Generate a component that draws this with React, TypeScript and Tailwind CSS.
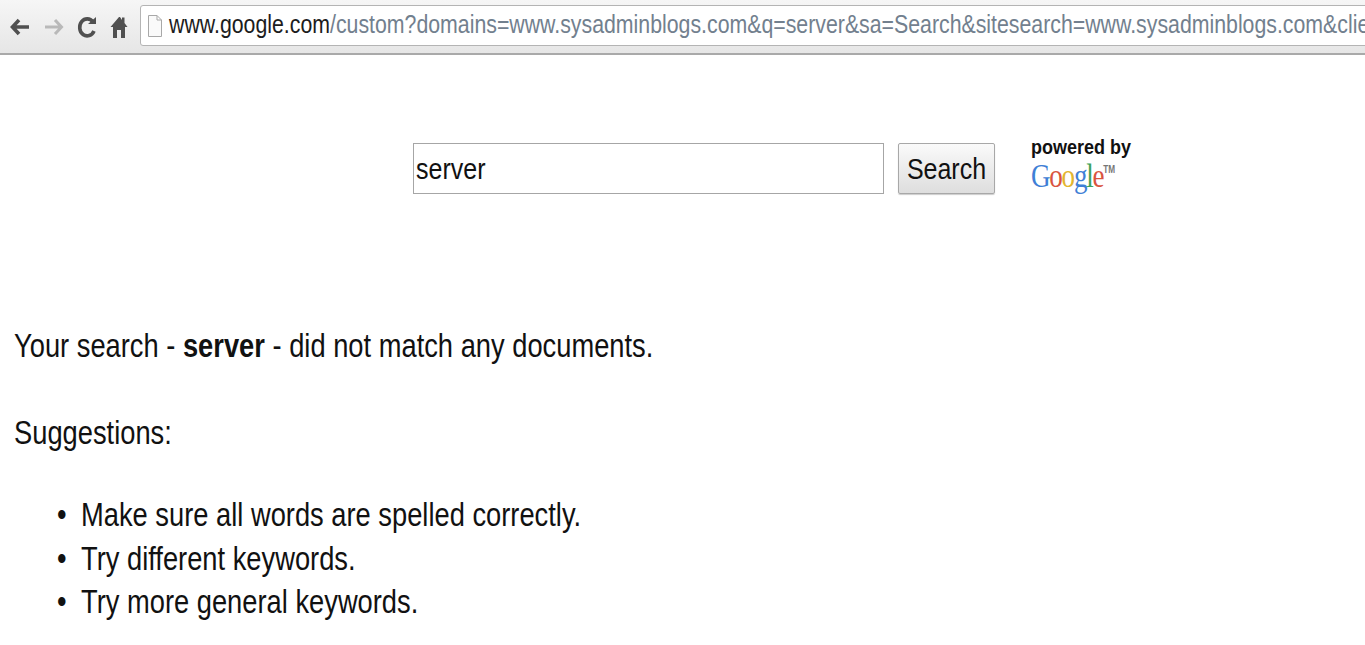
const sans = "font-['Liberation_Sans',Arial,sans-serif]";

function Toolbar() {
  return (
    <div className="h-[55px] flex items-center bg-gradient-to-b from-[#f6f6f6] to-[#e6e6e6] border-b-2 border-[#a9a9a9] pl-[10px]">
      <svg width="20" height="18" viewBox="0 0 20 18" className="mr-[14px]">
        <path d="M9 2 L2.5 9 L9 16 M3 9 H19" fill="none" stroke="#505050" strokeWidth="3.6" />
      </svg>
      <svg width="20" height="18" viewBox="0 0 20 18" className="mr-[13px]">
        <path d="M11 2 L17.5 9 L11 16 M17 9 H1" fill="none" stroke="#b9b9b9" strokeWidth="3" />
      </svg>
      <svg width="20" height="24" viewBox="0 0 20 24" className="mr-[13px]">
        <path d="M16 7 A7.5 8.5 0 1 0 17 16" fill="none" stroke="#505050" strokeWidth="3.6" />
        <path d="M11 9 H19 V2 Z" fill="#505050" />
      </svg>
      <svg width="18" height="24" viewBox="0 0 18 24" className="mr-[12px]">
        <path d="M9 2 L0.5 12 H3 V23 H7 V15 H11 V23 H15 V12 H17.5 L14.5 8 V2.5 H12 V5 L10 2 Z" fill="#505050" />
      </svg>
      <div className="flex-1 h-[41px] -mr-2 mt-[-2px] flex items-center bg-white border border-[#b4b4b4] rounded-l-[3px] pl-[7px] overflow-hidden">
        <svg width="14" height="22" viewBox="0 0 14 22" className="mr-[7px] shrink-0">
          <path d="M0.5 0.5 H9 L13.5 5 V21.5 H0.5 Z M9 0.5 V5 H13.5" fill="#fafafa" stroke="#a8a8a8" />
        </svg>
        <span className={`${sans} text-[21.3px] leading-none whitespace-nowrap scale-y-[1.2] text-[#72808e]`}>
          <span className="text-[#1c1c1c]">www.google.com</span>
          /custom?domains=www.sysadminblogs.com&amp;q=server&amp;sa=Search&amp;sitesearch=www.sysadminblogs.com&amp;client=pub-556338665037
        </span>
      </div>
    </div>
  );
}

function GoogleLogo() {
  return (
    <div className="font-['Liberation_Serif',serif] text-[33px] leading-none tracking-[-1.5px] scale-x-[0.82] origin-left h-[38px] whitespace-nowrap">
      <span className="text-[#3f7fd6]">G</span>
      <span className="text-[#d9543f]">o</span>
      <span className="text-[#e3b52f]">o</span>
      <span className="text-[#3f7fd6]">g</span>
      <span className="text-[#3da35a]">l</span>
      <span className="text-[#d9543f]">e</span>
      <span className={`${sans} text-[#777] text-[10px] align-[14px] font-bold tracking-normal`}>TM</span>
    </div>
  );
}

function SearchForm() {
  return (
    <div className="flex items-start pt-[88px] pl-[413px]">
      <div className="w-[471px] h-[51px] flex items-center bg-white border border-[#a6a6a6] pl-[2px]">
        <span className={`${sans} text-[25px] leading-none scale-y-[1.2] text-[#111]`}>server</span>
      </div>
      <div className="ml-[14px] w-[97px] h-[51px] flex items-center justify-center bg-gradient-to-b from-[#fafafa] to-[#dedede] border border-[#a8a8a8] rounded-[2px] shadow-[0_1px_1px_rgba(0,0,0,0.2)]">
        <span className={`${sans} text-[25px] leading-none scale-y-[1.2] text-[#111]`}>Search</span>
      </div>
      <div className="ml-[36px] mt-[-9px] flex flex-col items-start">
        <span className={`${sans} text-[18px] h-[26px] leading-[26px] font-bold scale-y-[1.15] origin-left text-[#111] whitespace-nowrap`}>powered by</span>
        <GoogleLogo />
      </div>
    </div>
  );
}

export default function App() {
  const line = "h-[43.5px] leading-[43.5px] text-[27.3px] scale-y-[1.2] text-[#111] whitespace-nowrap";
  return (
    <div className={`${sans} min-h-screen bg-white overflow-hidden`}>
      <Toolbar />
      <SearchForm />
      <div className="pl-[14px] pt-[126px]">
        <p className={line}>
          Your search - <b>server</b> - did not match any documents.
        </p>
        <p className={`${line} mt-[43.5px]`}>Suggestions:</p>
        <ul className="mt-[38.5px] pl-[43px]">
          {["Make sure all words are spelled correctly.", "Try different keywords.", "Try more general keywords."].map((t) => (
            <li key={t} className={`${line} flex`}>
              <span className="w-[24px]">•</span>
              {t}
            </li>
          ))}
        </ul>
      </div>
    </div>
  );
}
